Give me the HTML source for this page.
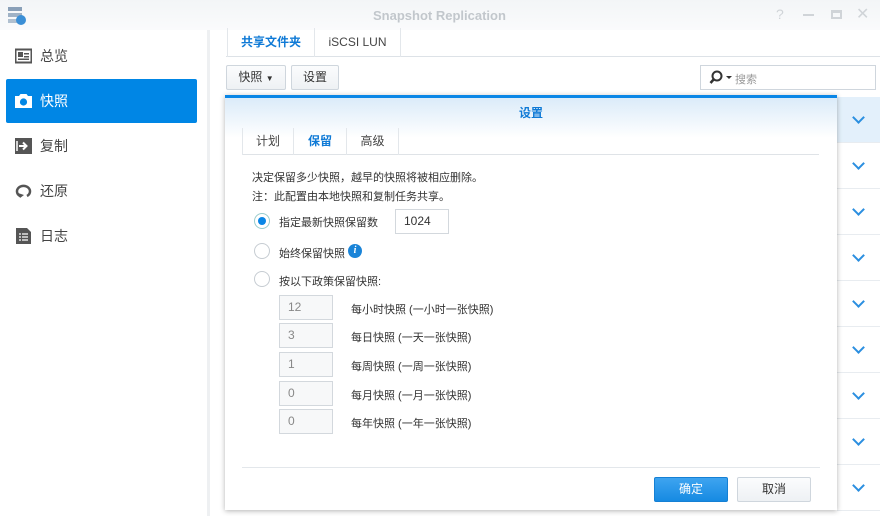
<!DOCTYPE html>
<html><head><meta charset="utf-8"><style>
*{box-sizing:border-box;margin:0;padding:0}
body{width:880px;height:516px;overflow:hidden;background:#fff;font-family:"Liberation Sans","Noto Sans CJK SC",sans-serif;font-size:12px;color:#333;position:relative}
.abs{position:absolute}
.title{left:0;top:0;width:880px;height:30px;background:linear-gradient(#f3f5f7,#fafbfc)}
.sb{left:0;top:30px;width:210px;height:486px;background:#fff;border-right:3px solid #eef0f2}
.item{position:absolute;left:6px;width:191px;height:44px;font-size:14px;color:#444;display:flex;align-items:center;padding-left:34px}
.item.on{background:#0086e5;color:#fff;border-radius:2px}
.ico{position:absolute;left:9px;top:14px;width:17px;height:16px}
.row{position:absolute;left:837px;width:43px;height:46px;border-bottom:1px solid #e8ecf0}
.chev{position:absolute;left:17px;top:16px;width:9px;height:9px;border-right:2px solid #2b8fe0;border-bottom:2px solid #2b8fe0;transform:rotate(45deg)}
.btn{position:absolute;height:25px;border:1px solid #cfd6dd;background:linear-gradient(#fbfcfd,#eef1f4);border-radius:2px;font-size:12px;color:#333;text-align:center;line-height:23px}
.inp{position:absolute;left:279px;width:54px;height:25px;border:1px solid #d3d8dd;background:#f7f8f9;color:#888;padding-left:8px;line-height:23px;font-size:12px}
.lbl{position:absolute;left:351px;font-size:11px;color:#333}
.radio{position:absolute;left:254px;width:16px;height:16px;border:1px solid #c6ccd2;border-radius:50%;background:#fff}
</style></head><body>
<div class="abs title"></div>
<svg class="abs" style="left:7px;top:5px" width="20" height="22"><rect x="1" y="2" width="14" height="4" fill="#8aa0b8"/><rect x="1" y="8" width="14" height="4" fill="#9fb2c6"/><rect x="1" y="14" width="14" height="4" fill="#b0c0d0"/><circle cx="14" cy="15" r="5" fill="#3b8fd6"/></svg>
<div class="abs" style="left:373px;top:8px;font-weight:bold;font-size:13px;color:#c2c7cc">Snapshot Replication</div>
<div class="abs" style="left:776px;top:6px;color:#d0d4d8;font-size:14px">?</div>
<div class="abs" style="left:803px;top:14px;width:11px;height:2px;background:#d0d4d8"></div>
<div class="abs" style="left:831px;top:10px;width:11px;height:9px;border:2px solid #d0d4d8;border-top-width:3px"></div>
<div class="abs" style="left:856px;top:4px;color:#d0d4d8;font-size:16px">✕</div>

<div class="abs sb"></div>
<div class="item" style="top:34px"><svg class="ico" viewBox="0 0 17 16"><rect x="0.5" y="1.5" width="16" height="13" fill="none" stroke="#555" stroke-width="2"/><rect x="3" y="4" width="5" height="5" fill="#555"/><rect x="9" y="5" width="5" height="1.5" fill="#555"/><rect x="9" y="8" width="5" height="1.5" fill="#555"/><rect x="3" y="10.5" width="11" height="1.5" fill="#555"/></svg>总览</div>
<div class="item on" style="top:79px"><svg class="ico" viewBox="0 0 17 16"><path d="M0 3h4l1.5-2h6L13 3h4v12H0z" fill="#fff"/><circle cx="8.5" cy="9" r="3.6" fill="#0086e5"/></svg>快照</div>
<div class="item" style="top:124px"><svg class="ico" viewBox="0 0 17 16"><rect width="17" height="16" fill="#555"/><path d="M4 8h6M8 4.5l3.5 3.5L8 11.5" stroke="#fff" stroke-width="2" fill="none"/><path d="M2 3v10" stroke="#fff" stroke-width="1.5"/></svg>复制</div>
<div class="item" style="top:169px"><svg class="ico" viewBox="0 0 17 16"><path d="M5 13A6.5 5.5 0 1 1 12 13" stroke="#555" stroke-width="2.5" fill="none"/><path d="M3 10l2 5 4-3z" fill="#555"/></svg>还原</div>
<div class="item" style="top:214px"><svg class="ico" viewBox="0 0 17 16"><path d="M1 0h11l4 4v12H1z" fill="#555"/><path d="M4 6h2M7 6h6M4 9h2M7 9h6M4 12h2M7 12h6" stroke="#fff" stroke-width="1.3"/></svg>日志</div>

<div class="abs" style="left:226px;top:28px;width:654px;height:29px;border-bottom:1px solid #dde2e7"></div>
<div class="abs" style="left:227px;top:28px;width:88px;height:29px;border-right:1px solid #e3e7eb;border-left:1px solid #e3e7eb;color:#0f7ad6;font-weight:bold;text-align:center;line-height:28px;font-size:12px">共享文件夹</div>
<div class="abs" style="left:315px;top:28px;width:86px;height:29px;border-right:1px solid #e3e7eb;text-align:center;line-height:28px;font-size:12px;color:#444">iSCSI LUN</div>
<div class="btn" style="left:226px;top:65px;width:60px">快照 <span style="font-size:8px">▼</span></div>
<div class="btn" style="left:291px;top:65px;width:48px">设置</div>
<div class="abs" style="left:700px;top:65px;width:176px;height:25px;border:1px solid #cfd6dd;background:#fff"><svg class="abs" style="left:8px;top:4px" width="26" height="16"><circle cx="8" cy="6" r="4.5" stroke="#333" stroke-width="2" fill="none"/><path d="M5 9l-3.5 4" stroke="#333" stroke-width="2.5"/><path d="M17 6h6l-3 3z" fill="#333"/></svg><span class="abs" style="left:34px;top:5px;color:#999;font-size:11px">搜索</span></div>

<div class="row" style="top:97px;background:#e3f0fb"><div class="chev"></div></div>
<div class="row" style="top:143px"><div class="chev"></div></div>
<div class="row" style="top:189px"><div class="chev"></div></div>
<div class="row" style="top:235px"><div class="chev"></div></div>
<div class="row" style="top:281px"><div class="chev"></div></div>
<div class="row" style="top:327px"><div class="chev"></div></div>
<div class="row" style="top:373px"><div class="chev"></div></div>
<div class="row" style="top:419px"><div class="chev"></div></div>
<div class="row" style="top:465px"><div class="chev"></div></div>

<div class="abs" style="left:225px;top:95px;width:612px;height:415px;background:#fff;border-top:3px solid #0a86e6;box-shadow:0 1px 5px rgba(0,0,0,.3)">
 <div class="abs" style="left:0;top:0;width:612px;height:40px;background:linear-gradient(#dbebf9,#fff)"></div>
 <div class="abs" style="left:0;top:6px;width:612px;text-align:center;color:#0f7ad6;font-weight:bold;font-size:12px">设置</div>
 <div class="abs" style="left:17px;top:30px;width:577px;height:27px;border-bottom:1px solid #dfe3e7"></div>
 <div class="abs" style="left:17px;top:30px;width:52px;height:27px;border-left:1px solid #e3e7eb;border-right:1px solid #e3e7eb;text-align:center;line-height:26px;color:#444">计划</div>
 <div class="abs" style="left:69px;top:30px;width:53px;height:27px;border-right:1px solid #e3e7eb;text-align:center;line-height:26px;color:#0f7ad6;font-weight:bold">保留</div>
 <div class="abs" style="left:122px;top:30px;width:52px;height:27px;border-right:1px solid #e3e7eb;text-align:center;line-height:26px;color:#444">高级</div>
 <div class="abs" style="left:27px;top:71px;font-size:11px;color:#333">决定保留多少快照，越早的快照将被相应删除。</div>
 <div class="abs" style="left:27px;top:90px;font-size:11px;color:#333">注：此配置由本地快照和复制任务共享。</div>
</div>
<div class="radio" style="top:213px;border-color:#9cc"><div class="abs" style="left:3px;top:3px;width:8px;height:8px;border-radius:50%;background:#0a86e6"></div></div>
<div class="abs" style="left:279px;top:214px;font-size:11px">指定最新快照保留数</div>
<div class="abs" style="left:395px;top:209px;width:54px;height:25px;border:1px solid #d3d8dd;padding-left:8px;line-height:23px">1024</div>
<div class="radio" style="top:243px"></div>
<div class="abs" style="left:279px;top:245px;font-size:11px">始终保留快照</div>
<div class="abs" style="left:348px;top:244px;width:14px;height:14px;border-radius:50%;background:#1a84d8;color:#fff;font-size:10px;font-weight:bold;font-style:italic;text-align:center;line-height:14px;font-family:'Liberation Serif',serif">i</div>
<div class="radio" style="top:271px"></div>
<div class="abs" style="left:279px;top:273px;font-size:11px">按以下政策保留快照:</div>
<div class="inp" style="top:295px">12</div><div class="lbl" style="top:301px">每小时快照 (一小时一张快照)</div>
<div class="inp" style="top:323px">3</div><div class="lbl" style="top:329px">每日快照 (一天一张快照)</div>
<div class="inp" style="top:352px">1</div><div class="lbl" style="top:358px">每周快照 (一周一张快照)</div>
<div class="inp" style="top:381px">0</div><div class="lbl" style="top:387px">每月快照 (一月一张快照)</div>
<div class="inp" style="top:409px">0</div><div class="lbl" style="top:415px">每年快照 (一年一张快照)</div>
<div class="abs" style="left:242px;top:467px;width:578px;height:1px;background:#e3e7eb"></div>
<div class="abs" style="left:654px;top:477px;width:74px;height:25px;background:linear-gradient(#3ea4f0,#168ae2);border:1px solid #1580d4;border-radius:2px;color:#fff;text-align:center;line-height:23px">确定</div>
<div class="btn" style="left:737px;top:477px;width:74px">取消</div>
</body></html>
